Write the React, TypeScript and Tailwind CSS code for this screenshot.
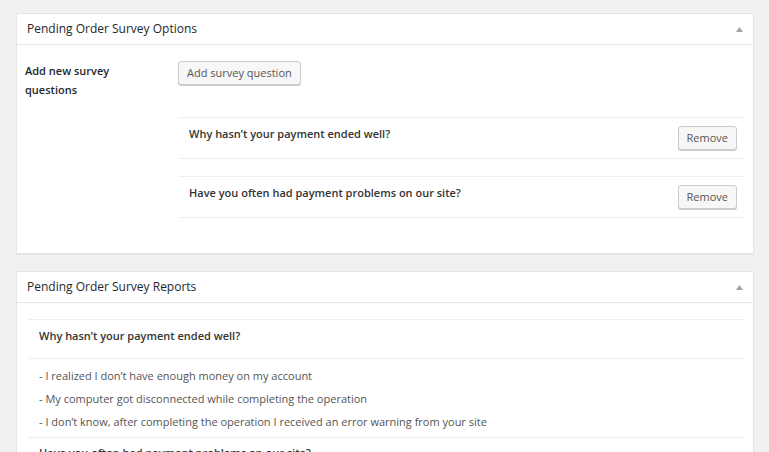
import React from 'react';

const questions = [
    'Why hasn\u2019t your payment ended well?',
    'Have you often had payment problems on our site?',
];

const answers = [
    '- I realized I don\u2019t have enough money on my account',
    '- My computer got disconnected while completing the operation',
    '- I don\u2019t know, after completing the operation I received an error warning from your site',
];

function Toggle() {
    return (
        <svg width="7" height="5" viewBox="0 0 7 5" className="mr-[10px]">
            <path d="M0 5 L3.5 0 L7 5 Z" fill="#a0a5aa" />
        </svg>
    );
}

function PanelHeader({ title }: { title: string }) {
    return (
        <div className="flex items-center justify-between h-[31px] border-b border-[#e5e5e5] pl-[10px]">
            <h2 className="text-[12px] text-[#23282d] leading-none">{title}</h2>
            <Toggle />
        </div>
    );
}

function WpButton({ children }: { children: React.ReactNode }) {
    return (
        <button className="h-[24px] px-[8px] text-[11px] leading-[22px] text-[#555] bg-[#f7f7f7] border border-[#cccccc] rounded-[3px] shadow-[0_1px_0_#cccccc]">
            {children}
        </button>
    );
}

export default function App() {
    return (
        <div
            className="min-h-[452px] bg-[#f1f1f1] pt-[13px] pl-[16px] pr-[15px] text-[11px] text-[#444]"
            style={{ fontFamily: '"Open Sans", "Noto Sans", sans-serif' }}
        >
            {/* Options panel */}
            <div className="bg-white border border-[#e5e5e5] shadow-[0_1px_1px_rgba(0,0,0,0.04)]">
                <PanelHeader title="Pending Order Survey Options" />
                <div className="flex pt-[16px] pb-[35px] pl-[8px] pr-[8px]">
                    <div className="w-[153px] font-semibold text-[#23282d] leading-[19px]">
                        Add new survey
                        <br />
                        questions
                    </div>
                    <div className="flex-1">
                        <WpButton>Add survey question</WpButton>
                        <div className="mt-[32px] flex flex-col gap-[17px]">
                            {questions.map((q) => (
                                <div
                                    key={q}
                                    className="flex items-start justify-between h-[42px] border-y border-[#eeeeee] pl-[11px] pr-[8px]"
                                >
                                    <span className="pt-[6px] leading-[20px] font-semibold text-[#333]">{q}</span>
                                    <div className="pt-[8px]">
                                        <WpButton>Remove</WpButton>
                                    </div>
                                </div>
                            ))}
                        </div>
                    </div>
                </div>
            </div>

            {/* Reports panel */}
            <div className="mt-[17px] bg-white border border-[#e5e5e5] border-b-0 shadow-[0_1px_1px_rgba(0,0,0,0.04)]">
                <PanelHeader title="Pending Order Survey Reports" />
                <div className="pt-[16px] pl-[11px] pr-[8px] pb-[20px]">
                    <div className="border-t border-[#eeeeee] pl-[11px] h-[39px] pt-[6px] leading-[20px] font-semibold text-[#333]">
                        {questions[0]}
                    </div>
                    <div className="border-t border-[#eeeeee] pl-[11px] pt-[5px] pb-[4px] leading-[23px] text-[#555]">
                        {answers.map((a) => (
                            <div key={a}>{a}</div>
                        ))}
                    </div>
                    <div className="border-t border-[#eeeeee] pl-[11px] pt-[5px] leading-[20px] font-semibold text-[#333]">
                        {questions[1]}
                    </div>
                </div>
            </div>
        </div>
    );
}
